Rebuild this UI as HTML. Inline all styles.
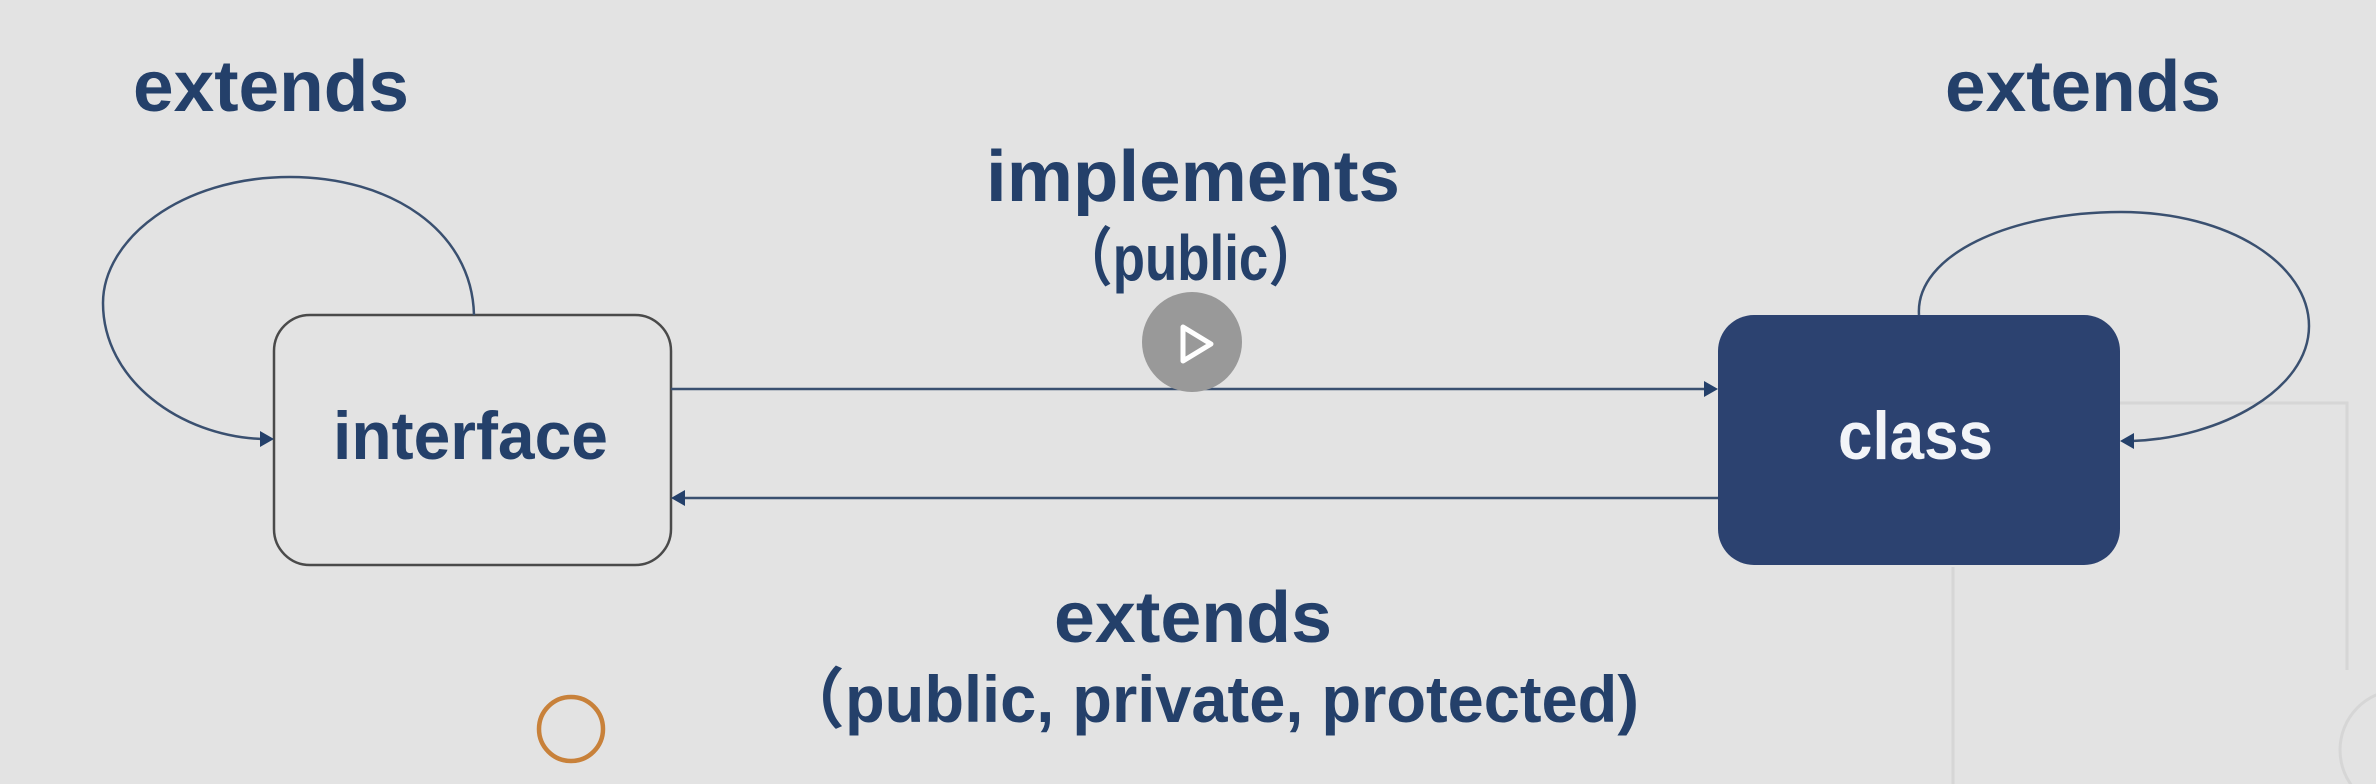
<!DOCTYPE html>
<html><head><meta charset="utf-8"><style>
html,body{margin:0;padding:0;background:#e3e3e3;}
svg{display:block;}
text{font-family:"Liberation Sans","Noto Sans CJK SC",sans-serif;font-weight:bold;fill:#24406a;}
</style></head><body>
<svg width="2376" height="784" viewBox="0 0 2376 784" xmlns="http://www.w3.org/2000/svg">
<rect width="2376" height="784" fill="#e3e3e3"/>
<g stroke="#d6d6d6" stroke-width="3" fill="none">
<path d="M1953 567 V784"/>
<path d="M2120 403 H2347 V670"/>
<circle cx="2400" cy="750" r="60"/>
</g>
<!-- boxes -->
<rect x="274" y="315" width="397" height="250" rx="36" fill="#e3e3e3" stroke="#4a4a4a" stroke-width="2.5"/>
<rect x="1718" y="315" width="402" height="250" rx="36" fill="#2c4270"/>
<!-- arrows -->
<g stroke="#3a5070" stroke-width="2.5" fill="none">
<path d="M671 389 H1706"/>
<path d="M1718 498 H684"/>
<path d="M474 315 C472 230 390 177 290 177 C180 177 103 240 103 303 C103 380 180 436 262 439"/>
<path d="M1919 315 C1915 255 2010 212 2121 212 C2230 212 2309 265 2309 326 C2309 390 2220 438 2132 441"/>
</g>
<g fill="#24406a">
<path d="M1718 389 L1704 381 L1704 397 Z"/>
<path d="M671 498 L685 490 L685 506 Z"/>
<path d="M274 439 L260 431 L260 447 Z"/>
<path d="M2120 441 L2134 433 L2134 449 Z"/>
</g>
<!-- texts -->
<text x="133" y="111" font-size="72" textLength="276" lengthAdjust="spacingAndGlyphs">extends</text>
<text x="1945" y="111" font-size="72" textLength="276" lengthAdjust="spacingAndGlyphs">extends</text>
<text x="986" y="201" font-size="72" textLength="414" lengthAdjust="spacingAndGlyphs">implements</text>
<text x="1060" y="280" font-size="64" textLength="261" lengthAdjust="spacingAndGlyphs">（public）</text>
<text x="333" y="459" font-size="68" textLength="275" lengthAdjust="spacingAndGlyphs">interface</text>
<text x="1838" y="459" font-size="68" textLength="155" lengthAdjust="spacingAndGlyphs" style="fill:#f2f4f8">class</text>
<text x="1054" y="642" font-size="72" textLength="278" lengthAdjust="spacingAndGlyphs">extends</text>
<text x="780" y="722" font-size="66" textLength="859" lengthAdjust="spacingAndGlyphs">（public, private, protected)</text>
<!-- orange circle -->
<circle cx="571" cy="729" r="32" fill="none" stroke="#c8813a" stroke-width="4.5"/>
<!-- play button -->
<circle cx="1192" cy="342" r="50" fill="#999999"/>
<path d="M1183 327 L1211 344 L1183 361 Z" fill="none" stroke="#ffffff" stroke-width="5" stroke-linejoin="round"/>
</svg>
</body></html>
